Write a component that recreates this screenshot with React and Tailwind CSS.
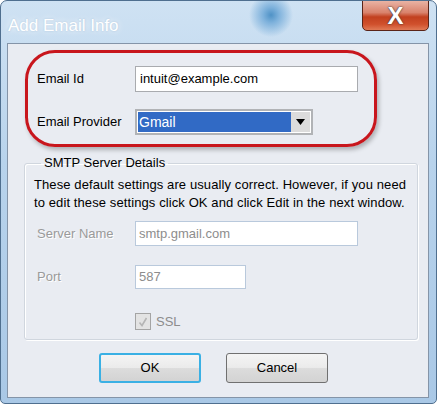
import React from "react";

const font = { fontFamily: '"Liberation Sans", Arial, sans-serif' };

const Field = ({ label, disabled, children }) => (
  <div className="flex items-center">
    <span
      className={
        "w-[98px] text-[13px] leading-[16px] " +
        (disabled ? "text-[#9a9a9a] [text-shadow:1px_1px_0_#ffffff]" : "text-black")
      }
    >
      {label}
    </span>
    {children}
  </div>
);

export default function App() {
  return (
    <div className="w-[441px] h-[406px] bg-white" style={font}>
      <div className="w-[437px] h-[404px] rounded-t-[7px] rounded-b-[5px] border border-[#4f6f8f] bg-[linear-gradient(180deg,#cfe2f3_0%,#b8d3ec_40%,#a9c8e6_100%)] flex flex-col overflow-hidden">
        {/* title bar */}
        <div className="h-[42px] flex items-start justify-between bg-[radial-gradient(circle_at_270px_14px,#4f92c6_0,#7fb2dc_8px,transparent_22px)]">
          <span className="mt-[12px] ml-[7px] text-[17px] text-white [text-shadow:0_0_6px_#ffffff,0_0_2px_#8fb0cf]">
            Add Email Info
          </span>
          <div className="mr-[7px] -mt-px w-[67px] h-[31px] rounded-b-[5px] border border-[#5a2418] bg-[linear-gradient(180deg,#e9b3a4_0%,#d9826c_40%,#c2401f_55%,#d0502c_80%,#e07a56_100%)] flex items-center justify-center">
            <span className="text-[24px] font-bold text-white leading-none [text-shadow:0_0_1px_#3a3a3a,0_0_2px_#3a3a3a]">
              X
            </span>
          </div>
        </div>

        {/* client area */}
        <div className="ml-[6px] w-[422px] h-[355px] border border-[#8494a8] bg-[#e9ecf2] flex flex-col">
          {/* highlighted block */}
          <div className="mt-[6px] ml-[17px] w-[352px] h-[97px] rounded-[30px] border-[3px] border-[#c8161d] shadow-[2px_3px_4px_rgba(0,0,0,0.25)] flex flex-col pt-[13px] pl-[9px] gap-[17px]">
            <Field label="Email Id">
              <div className="w-[223px] h-[26px] border border-[#a9abaf] bg-white flex items-center pl-[4px] text-[13px] text-black">
                intuit@example.com
              </div>
            </Field>
            <Field label="Email Provider">
              <div className="w-[178px] h-[26px] border-2 border-[#b1b3b6] bg-white p-px flex">
                <div className="flex-1 bg-[#316ac5] text-white text-[14px] flex items-center pl-px">
                  Gmail
                </div>
                <div className="w-[19px] bg-[#dcdcdc] flex items-center justify-center">
                  <svg width="9" height="6" viewBox="0 0 9 6">
                    <path d="M0 0h9L4.5 6z" fill="#000" />
                  </svg>
                </div>
              </div>
            </Field>
          </div>

          {/* smtp group */}
          <fieldset className="mt-[8px] ml-[16px] w-[394px] h-[185px] border border-[#d0d6de] rounded-[3px] shadow-[inset_1px_1px_0_#ffffff,1px_1px_0_#ffffff] pl-[9px]">
            <legend className="ml-[7px] px-[3px] text-[13px] leading-[16px] text-black">
              SMTP Server Details
            </legend>
            <p className="mt-[5px] w-[374px] text-[13px] leading-[18px] text-black tracking-[0.1px]">
              These default settings are usually correct. However, if you need to edit these settings click OK and click Edit in the next window.
            </p>
            <div className="mt-[9px] ml-[3px] flex flex-col">
              <Field label="Server Name" disabled>
                <div className="w-[223px] h-[25px] border border-[#b9c9dc] bg-white flex items-center pl-[3px] text-[13px] text-[#8d8d8d]">
                  smtp.gmail.com
                </div>
              </Field>
              <div className="mt-[19px]">
                <Field label="Port" disabled>
                  <div className="w-[111px] h-[24px] border border-[#b9c9dc] bg-white flex items-center pl-[3px] text-[13px] text-[#8d8d8d]">
                    587
                  </div>
                </Field>
              </div>
              <div className="mt-[23px] ml-[98px] flex items-center gap-[5px]">
                <div className="w-[16px] h-[17px] border border-[#a4a4a4] bg-[#e3e3e3] flex items-center justify-center">
                  <svg width="10" height="10" viewBox="0 0 10 10">
                    <path d="M1.5 5.5L4 8.5L8.5 1" fill="none" stroke="#b5b5b5" strokeWidth="1.6" />
                  </svg>
                </div>
                <span className="text-[13px] text-[#8d8d8d]">SSL</span>
              </div>
            </div>
          </fieldset>

          {/* buttons */}
          <div className="mt-[13px] ml-[91px] flex gap-[25px]">
            <button className="w-[102px] h-[30px] rounded-[3px] border-2 border-[#3ab0e4] bg-[linear-gradient(180deg,#f4f4f4_0%,#ebebeb_48%,#dcdcdc_52%,#d3d3d3_100%)] text-[13px] text-black">
              OK
            </button>
            <button className="w-[102px] h-[30px] rounded-[3px] border border-[#707070] bg-[linear-gradient(180deg,#f4f4f4_0%,#ebebeb_48%,#dcdcdc_52%,#d3d3d3_100%)] text-[13px] text-black">
              Cancel
            </button>
          </div>
        </div>
      </div>
    </div>
  );
}
